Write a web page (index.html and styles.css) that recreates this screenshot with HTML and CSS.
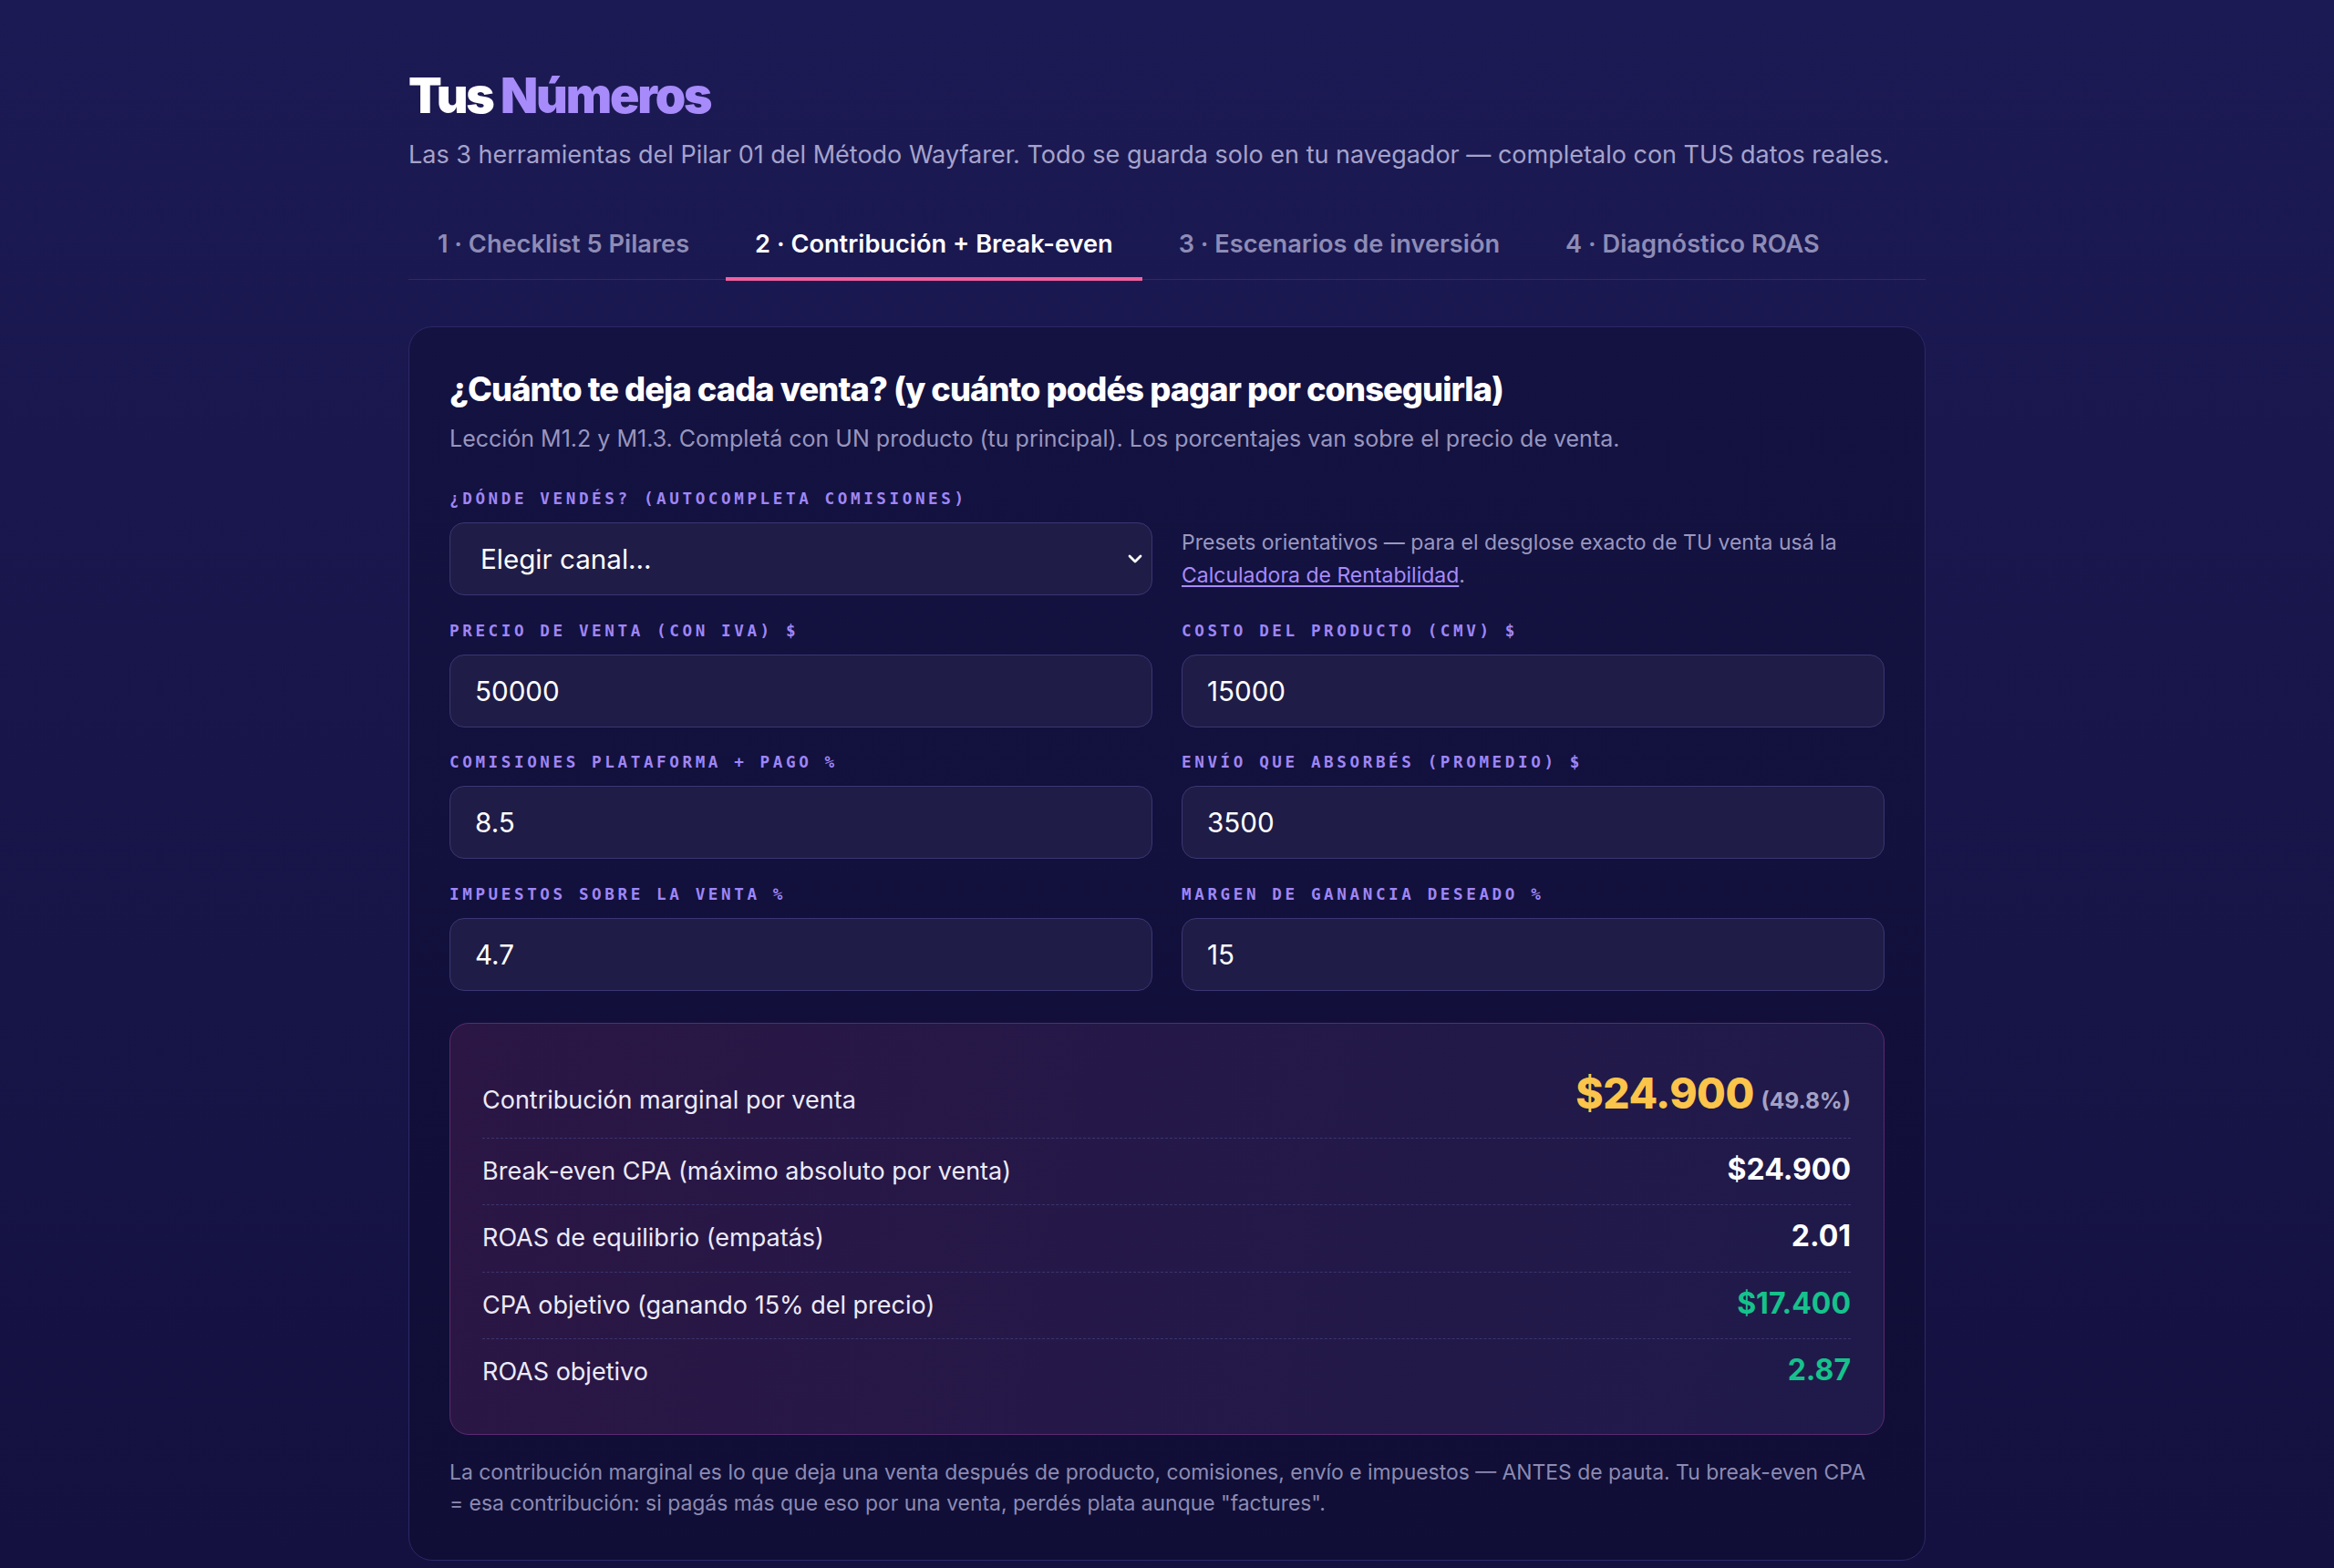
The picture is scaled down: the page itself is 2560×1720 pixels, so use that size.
FILE: index.html
```html
<!DOCTYPE html>
<html lang="es">
<head>
<meta charset="utf-8">
<title>Tus Números</title>
<link rel="stylesheet" href="styles.css">
</head>
<body>
<div class="wrap">
  <h1 class="title">Tus <span class="accent">Números</span></h1>
  <p class="subtitle">Las 3 herramientas del Pilar 01 del Método Wayfarer. Todo se guarda solo en tu navegador — completalo con TUS datos reales.</p>

  <nav class="tabs">
    <div class="tab">1 · Checklist 5 Pilares</div>
    <div class="tab active">2 · Contribución + Break-even</div>
    <div class="tab">3 · Escenarios de inversión</div>
    <div class="tab">4 · Diagnóstico ROAS</div>
  </nav>

  <section class="card">
    <h2 class="card-title">¿Cuánto te deja cada venta? (y cuánto podés pagar por conseguirla)</h2>
    <p class="lesson">Lección M1.2 y M1.3. Completá con UN producto (tu principal). Los porcentajes van sobre el precio de venta.</p>

    <div class="grid">
      <div class="field">
        <label class="label">¿Dónde vendés? (autocompleta comisiones)</label>
        <div class="select-wrap">
          <select class="control select">
            <option>Elegir canal...</option>
          </select>
          <svg class="chev" viewBox="0 0 16 10" width="16" height="10"><path d="M2 2l6 6 6-6" fill="none" stroke="#ffffff" stroke-width="2.8" stroke-linecap="round" stroke-linejoin="round"/></svg>
        </div>
      </div>
      <div class="presets">
        <p>Presets orientativos — para el desglose exacto de TU venta usá la <a href="#">Calculadora de Rentabilidad</a>.</p>
      </div>

      <div class="field">
        <label class="label">Precio de venta (con IVA) $</label>
        <input class="control" type="text" value="50000">
      </div>
      <div class="field">
        <label class="label">Costo del producto (CMV) $</label>
        <input class="control" type="text" value="15000">
      </div>

      <div class="field">
        <label class="label">Comisiones plataforma + pago %</label>
        <input class="control" type="text" value="8.5">
      </div>
      <div class="field">
        <label class="label">Envío que absorbés (promedio) $</label>
        <input class="control" type="text" value="3500">
      </div>

      <div class="field">
        <label class="label">Impuestos sobre la venta %</label>
        <input class="control" type="text" value="4.7">
      </div>
      <div class="field">
        <label class="label">Margen de ganancia deseado %</label>
        <input class="control" type="text" value="15">
      </div>
    </div>

    <div class="results">
      <div class="row first">
        <span class="r-label">Contribución marginal por venta</span>
        <span class="r-value big"><span class="yellow">$24.900</span> <span class="pct">(49.8%)</span></span>
      </div>
      <div class="row">
        <span class="r-label">Break-even CPA (máximo absoluto por venta)</span>
        <span class="r-value">$24.900</span>
      </div>
      <div class="row">
        <span class="r-label">ROAS de equilibrio (empatás)</span>
        <span class="r-value">2.01</span>
      </div>
      <div class="row">
        <span class="r-label">CPA objetivo (ganando 15% del precio)</span>
        <span class="r-value green">$17.400</span>
      </div>
      <div class="row">
        <span class="r-label">ROAS objetivo</span>
        <span class="r-value green">2.87</span>
      </div>
    </div>

    <p class="note">La contribución marginal es lo que deja una venta después de producto, comisiones, envío e impuestos — ANTES de pauta. Tu break-even CPA = esa contribución: si pagás más que eso por una venta, perdés plata aunque "factures".</p>
  </section>
</div>
</body>
</html>
```

FILE: styles.css
```css
* { box-sizing: border-box; }

html, body {
  margin: 0;
  padding: 0;
}

body {
  min-height: 1720px;
  background: linear-gradient(180deg, #1c1a54 0%, #18154a 50%, #141140 100%);
  font-family: Inter, "Noto Sans", "Liberation Sans", sans-serif;
  color: #ffffff;
}

.wrap {
  width: 1664px;
  margin: 0 auto;
  padding-top: 76px;
}

.title {
  margin: 0;
  font-size: 53.5px;
  line-height: 1.1;
  font-weight: 900;
  letter-spacing: -0.04em;
  color: #ffffff;
}

.accent { color: #a78bfa; }

.subtitle {
  margin: 16px 0 0;
  font-size: 27px;
  line-height: 38px;
  color: #a5a3cb;
}

.tabs {
  display: flex;
  gap: 8px;
  margin-top: 40px;
  border-bottom: 1.6px solid #2e2a66;
}

.tab {
  padding: 19px 32px 17px;
  font-size: 27.2px;
  line-height: 39px;
  font-weight: 600;
  color: #8e8cb6;
  border-bottom: 4.8px solid transparent;
  margin-bottom: -1.6px;
}

.tab.active {
  color: #ffffff;
  border-bottom-color: #f0609e;
}

.card {
  margin-top: 51px;
  border: 1.6px solid #2b2866;
  border-radius: 26px;
  padding: 46px 44px 44px;
  background: linear-gradient(180deg, #141241 0%, #100e36 100%);
}

.card-title {
  margin: 0;
  font-size: 36.2px;
  line-height: 45px;
  font-weight: 800;
  letter-spacing: -0.025em;
  color: #ffffff;
}

.lesson {
  margin: 14px 0 0;
  font-size: 25px;
  line-height: 35px;
  color: #9896bf;
}

.grid {
  display: grid;
  grid-template-columns: 1fr 1fr;
  column-gap: 32px;
  row-gap: 25.6px;
  margin-top: 35px;
}

.label {
  display: block;
  font-family: "DejaVu Sans Mono", "Liberation Mono", monospace;
  font-weight: 700;
  font-size: 17.6px;
  line-height: 26px;
  letter-spacing: 3.6px;
  text-transform: uppercase;
  color: #9f86f6;
  margin-bottom: 13px;
}

.control {
  display: block;
  width: 100%;
  height: 80px;
  background: #1f1c47;
  border: 1.6px solid #3b3673;
  border-radius: 16px;
  color: #ffffff;
  font-family: Inter, "Noto Sans", sans-serif;
  font-size: 29.6px;
  padding: 0 24px 0 27px;
  outline: none;
}

.select-wrap {
  position: relative;
}

.select {
  appearance: none;
  -webkit-appearance: none;
  padding-left: 33px;
}

.chev {
  position: absolute;
  right: 11px;
  top: 35px;
}

.presets {
  align-self: end;
  height: 80px;
  display: flex;
  align-items: center;
}

.presets p {
  margin: 0;
  font-size: 23px;
  line-height: 36px;
  color: #9a98c0;
}

.presets a {
  color: #a78bfa;
  text-decoration: underline;
  text-underline-offset: 3px;
}

.results {
  margin-top: 35px;
  border: 1.6px solid #5a2a70;
  border-radius: 21px;
  padding: 35px 36px 31px 35px;
  background: linear-gradient(100deg, #2b1644 0%, #251848 45%, #1f1a4a 100%);
}

.row {
  display: flex;
  justify-content: space-between;
  align-items: baseline;
  padding: 17px 0;
  border-bottom: 1.6px dashed #3a356f;
}

.row:last-child { border-bottom: none; }

.r-label {
  font-size: 27px;
  line-height: 38.4px;
  color: #eceaf8;
}

.r-value {
  font-size: 32px;
  line-height: 34.7px;
  font-weight: 700;
  color: #ffffff;
}

.r-value.big {
  line-height: 48px;
}

.yellow {
  font-size: 46px;
  font-weight: 800;
  letter-spacing: -0.01em;
  color: #fbc44b;
}

.pct {
  font-size: 24.5px;
  font-weight: 700;
  color: #a3a1c6;
}

.green { color: #16c28c; }

.note {
  margin: 24px 0 0;
  font-size: 22.9px;
  line-height: 34.5px;
  color: #8d8bb3;
}
```
